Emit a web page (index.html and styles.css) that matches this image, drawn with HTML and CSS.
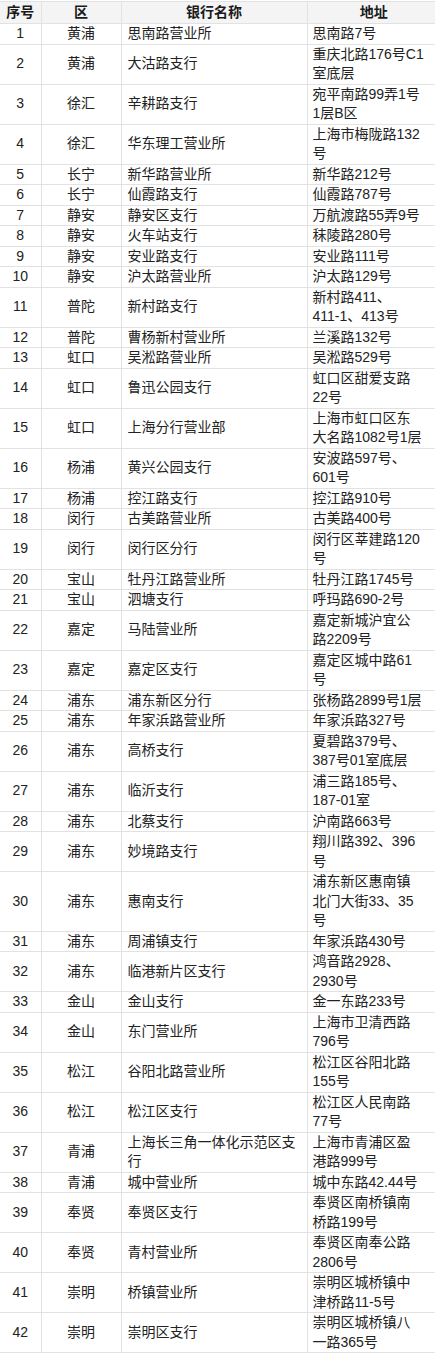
FILE: index.html
```html
<!DOCTYPE html>
<html lang="zh">
<head>
<meta charset="utf-8">
<title>网点列表</title>
<link rel="stylesheet" href="styles.css">
</head>
<body>
<table class="list">
<colgroup><col class="c-no"><col class="c-dist"><col class="c-name"><col class="c-addr"></colgroup>
<thead>
<tr><th>序号</th><th>区</th><th>银行名称</th><th>地址</th></tr>
</thead>
<tbody>
<tr><td class="n">1</td><td class="d">黄浦</td><td>思南路营业所</td><td>思南路7号</td></tr>
<tr><td class="n">2</td><td class="d">黄浦</td><td>大沽路支行</td><td>重庆北路176号C1<br>室底层</td></tr>
<tr><td class="n">3</td><td class="d">徐汇</td><td>辛耕路支行</td><td>宛平南路99弄1号<br>1层B区</td></tr>
<tr><td class="n">4</td><td class="d">徐汇</td><td>华东理工营业所</td><td>上海市梅陇路132<br>号</td></tr>
<tr><td class="n">5</td><td class="d">长宁</td><td>新华路营业所</td><td>新华路212号</td></tr>
<tr><td class="n">6</td><td class="d">长宁</td><td>仙霞路支行</td><td>仙霞路787号</td></tr>
<tr><td class="n">7</td><td class="d">静安</td><td>静安区支行</td><td>万航渡路55弄9号</td></tr>
<tr><td class="n">8</td><td class="d">静安</td><td>火车站支行</td><td>秣陵路280号</td></tr>
<tr><td class="n">9</td><td class="d">静安</td><td>安业路支行</td><td>安业路111号</td></tr>
<tr><td class="n">10</td><td class="d">静安</td><td>沪太路营业所</td><td>沪太路129号</td></tr>
<tr><td class="n">11</td><td class="d">普陀</td><td>新村路支行</td><td>新村路411、<br>411-1、413号</td></tr>
<tr><td class="n">12</td><td class="d">普陀</td><td>曹杨新村营业所</td><td>兰溪路132号</td></tr>
<tr><td class="n">13</td><td class="d">虹口</td><td>吴淞路营业所</td><td>吴淞路529号</td></tr>
<tr><td class="n">14</td><td class="d">虹口</td><td>鲁迅公园支行</td><td>虹口区甜爱支路<br>22号</td></tr>
<tr><td class="n">15</td><td class="d">虹口</td><td>上海分行营业部</td><td>上海市虹口区东<br>大名路1082号1层</td></tr>
<tr><td class="n">16</td><td class="d">杨浦</td><td>黄兴公园支行</td><td>安波路597号、<br>601号</td></tr>
<tr><td class="n">17</td><td class="d">杨浦</td><td>控江路支行</td><td>控江路910号</td></tr>
<tr><td class="n">18</td><td class="d">闵行</td><td>古美路营业所</td><td>古美路400号</td></tr>
<tr><td class="n">19</td><td class="d">闵行</td><td>闵行区分行</td><td>闵行区莘建路120<br>号</td></tr>
<tr><td class="n">20</td><td class="d">宝山</td><td>牡丹江路营业所</td><td>牡丹江路1745号</td></tr>
<tr><td class="n">21</td><td class="d">宝山</td><td>泗塘支行</td><td>呼玛路690-2号</td></tr>
<tr><td class="n">22</td><td class="d">嘉定</td><td>马陆营业所</td><td>嘉定新城沪宜公<br>路2209号</td></tr>
<tr><td class="n">23</td><td class="d">嘉定</td><td>嘉定区支行</td><td>嘉定区城中路61<br>号</td></tr>
<tr><td class="n">24</td><td class="d">浦东</td><td>浦东新区分行</td><td>张杨路2899号1层</td></tr>
<tr><td class="n">25</td><td class="d">浦东</td><td>年家浜路营业所</td><td>年家浜路327号</td></tr>
<tr><td class="n">26</td><td class="d">浦东</td><td>高桥支行</td><td>夏碧路379号、<br>387号01室底层</td></tr>
<tr><td class="n">27</td><td class="d">浦东</td><td>临沂支行</td><td>浦三路185号、<br>187-01室</td></tr>
<tr><td class="n">28</td><td class="d">浦东</td><td>北蔡支行</td><td>沪南路663号</td></tr>
<tr><td class="n">29</td><td class="d">浦东</td><td>妙境路支行</td><td>翔川路392、396<br>号</td></tr>
<tr><td class="n">30</td><td class="d">浦东</td><td>惠南支行</td><td>浦东新区惠南镇<br>北门大街33、35<br>号</td></tr>
<tr><td class="n">31</td><td class="d">浦东</td><td>周浦镇支行</td><td>年家浜路430号</td></tr>
<tr><td class="n">32</td><td class="d">浦东</td><td>临港新片区支行</td><td>鸿音路2928、<br>2930号</td></tr>
<tr><td class="n">33</td><td class="d">金山</td><td>金山支行</td><td>金一东路233号</td></tr>
<tr><td class="n">34</td><td class="d">金山</td><td>东门营业所</td><td>上海市卫清西路<br>796号</td></tr>
<tr><td class="n">35</td><td class="d">松江</td><td>谷阳北路营业所</td><td>松江区谷阳北路<br>155号</td></tr>
<tr><td class="n">36</td><td class="d">松江</td><td>松江区支行</td><td>松江区人民南路<br>77号</td></tr>
<tr><td class="n">37</td><td class="d">青浦</td><td>上海长三角一体化示范区支<br>行</td><td>上海市青浦区盈<br>港路999号</td></tr>
<tr><td class="n">38</td><td class="d">青浦</td><td>城中营业所</td><td>城中东路42.44号</td></tr>
<tr><td class="n">39</td><td class="d">奉贤</td><td>奉贤区支行</td><td>奉贤区南桥镇南<br>桥路199号</td></tr>
<tr><td class="n">40</td><td class="d">奉贤</td><td>青村营业所</td><td>奉贤区南奉公路<br>2806号</td></tr>
<tr><td class="n">41</td><td class="d">崇明</td><td>桥镇营业所</td><td>崇明区城桥镇中<br>津桥路11-5号</td></tr>
<tr><td class="n">42</td><td class="d">崇明</td><td>崇明区支行</td><td>崇明区城桥镇八<br>一路365号</td></tr>
</tbody>
</table>
</body>
</html>
```

FILE: styles.css
```css
html, body {
  margin: 0;
  padding: 0;
  background: #ffffff;
}
body {
  font-family: "Liberation Sans", "Noto Sans CJK SC", sans-serif;
  color: #222222;
  font-size: 14px;
}
.list {
  width: 435px;
  margin-top: 1px;
  border-collapse: collapse;
  table-layout: fixed;
}
.c-no { width: 41px; }
.c-dist { width: 80px; }
.c-name { width: 186px; }
.c-addr { width: 128px; }
.list th,
.list td {
  border: 1px solid #e2e2e2;
  padding: 0 0 0 6px;
  line-height: 19.5px;
  vertical-align: middle;
  white-space: nowrap;
  overflow: hidden;
  text-align: left;
}
.list tr > :first-child { border-left: none; }
.list tr > :last-child { border-right: none; padding-left: 5px; }
.list th {
  background: #f4f4f4;
  font-weight: bold;
  text-align: center;
  line-height: 21px;
  padding: 0;
  color: #1a1a1a;
}
.list td.n,
.list td.d {
  text-align: center;
  padding: 0;
}
```
